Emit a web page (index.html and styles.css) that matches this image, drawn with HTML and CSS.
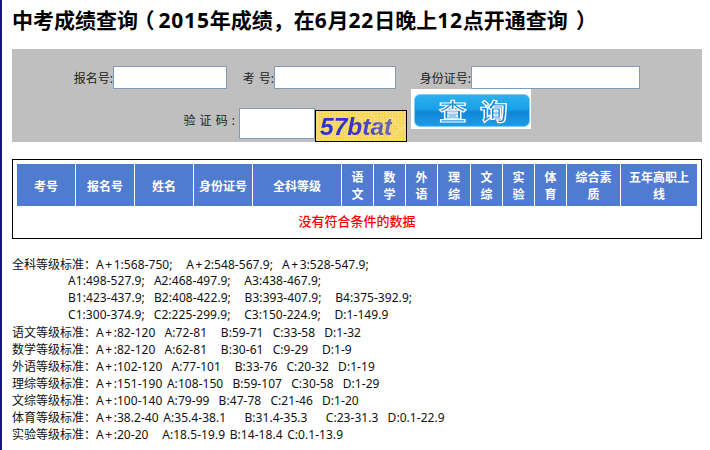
FILE: index.html
```html
<!DOCTYPE html>
<html lang="zh-CN">
<head>
<meta charset="utf-8">
<title>中考成绩查询</title>
<link rel="stylesheet" href="styles.css">
</head>
<body>
<main class="page">
  <h1 class="title">中考成绩查询<span class="paren-open">（</span><span class="num">2015</span>年成绩<span class="mid">，</span>在<span class="num">6</span>月<span class="num">22</span>日晚上<span class="num">12</span>点开通查询<span class="paren-close">）</span></h1>
  <form class="search">
    <div class="row-fields">
      <label class="lbl lbl-a" for="f1">报名号:</label><input class="field field-a" id="f1" type="text">
      <label class="lbl lbl-b" for="f2">考 号:</label><input class="field field-b" id="f2" type="text">
      <label class="lbl lbl-c" for="f3">身份证号:</label><input class="field field-c" id="f3" type="text">
    </div>
    <div class="row-code">
      <label class="lbl lbl-code" for="f4">验 证 码 :</label><input class="field field-code" id="f4" type="text">
      <div class="captcha"><span class="captcha-text">57btat</span>
        <svg class="captcha-noise" viewBox="0 0 90 30" aria-hidden="true"><path d="M55 2l9 12 12-8M62 14l-4 14M76 6l8 12-10 10M84 18l6-3M40 3l6 7" /></svg>
      </div>
      <button class="query" type="button"><span class="query-face"><span class="query-text">查 询</span></span></button>
    </div>
  </form>
  <section class="results">
    <table class="grid">
      <thead>
        <tr>
          <th class="c58">考号</th><th class="c58">报名号</th><th class="c58">姓名</th><th class="c58">身份证号</th><th class="c88">全科等级</th>
          <th class="c31">语文</th><th class="c31">数学</th><th class="c31">外语</th><th class="c32">理综</th><th class="c31">文综</th><th class="c31">实验</th><th class="c31">体育</th>
          <th class="c53">综合素质</th><th class="c76">五年高职上线</th>
        </tr>
      </thead>
      <tbody>
        <tr><td class="empty" colspan="14">没有符合条件的数据</td></tr>
      </tbody>
    </table>
  </section>
  <div class="notes">
    <p>全科等级标准<span class="colon">：</span><span class="v">A<span class="plus">+</span>1:568-750;   A<span class="plus">+</span>2:548-567.9;  A<span class="plus">+</span>3:528-547.9;</span></p>
    <p class="indent"><span class="v">A1:498-527.9;  A2:468-497.9;   A3:438-467.9;</span></p>
    <p class="indent"><span class="v">B1:423-437.9;  B2:408-422.9;   B3:393-407.9;   B4:375-392.9;</span></p>
    <p class="indent"><span class="v">C1:300-374.9;  C2:225-299.9;   C3:150-224.9;   D:1-149.9</span></p>
    <p>语文等级标准<span class="colon">：</span><span class="v">A<span class="plus">+</span>:82-120  A:72-81   B:59-71  C:33-58  D:1-32</span></p>
    <p>数学等级标准<span class="colon">：</span><span class="v">A<span class="plus">+</span>:82-120  A:62-81   B:30-61  C:9-29   D:1-9</span></p>
    <p>外语等级标准<span class="colon">：</span><span class="v">A<span class="plus">+</span>:102-120  A:77-101   B:33-76  C:20-32  D:1-19</span></p>
    <p>理综等级标准<span class="colon">：</span><span class="v">A<span class="plus">+</span>:151-190 A:108-150  B:59-107  C:30-58  D:1-29</span></p>
    <p>文综等级标准<span class="colon">：</span><span class="v">A<span class="plus">+</span>:100-140 A:79-99  B:47-78  C:21-46  D:1-20</span></p>
    <p>体育等级标准<span class="colon">：</span><span class="v">A<span class="plus">+</span>:38.2-40 A:35.4-38.1    B:31.4-35.3    C:23-31.3  D:0.1-22.9</span></p>
    <p>实验等级标准<span class="colon">：</span><span class="v">A<span class="plus">+</span>:20-20   A:18.5-19.9 B:14-18.4 C:0.1-13.9</span></p>
  </div>
</main>
</body>
</html>
```
FILE: styles.css
```css
* { box-sizing: border-box; }
html, body { margin: 0; padding: 0; background: #fff; }
body {
  width: 710px;
  height: 450px;
  overflow: hidden;
  color: #000;
  font-family: "Noto Sans", "Noto Sans CJK SC", sans-serif;
  font-size: 12px;
}
.page {
  height: 450px;
  border-left: 2px solid #1a1288;
  padding-left: 10px;
  width: 702px;
}
.title {
  margin: 0;
  height: 49px;
  padding-top: 3px;
  font-size: 21px;
  line-height: 32px;
  font-weight: 700;
  white-space: nowrap;
}
.num { letter-spacing: 0.8px; }
.paren-open { font-feature-settings: "palt"; padding-left: 5px; padding-right: 5px; }
.paren-close { font-feature-settings: "palt"; padding-left: 9px; }
.mid { font-family: "Noto Sans CJK TC", sans-serif; }
.search {
  width: 690px;
  height: 93px;
  background: #bfbfbf;
  padding-top: 17px;
}
.row-fields { display: flex; height: 23px; align-items: stretch; }
.row-code { display: flex; height: 53px; }
.lbl { display: block; text-align: right; line-height: 25px; color: #222; white-space: pre; word-spacing: 1px; }
.lbl-a { width: 101px; }
.lbl-b { width: 47px; }
.lbl-c { width: 75px; }
.field { height: 23px; border: 1px solid #7f9db9; background: #fff; padding: 0; }
.field-a { width: 114px; }
.field-b { width: 122px; }
.field-c { width: 169px; }
.lbl-code { width: 227px; padding-top: 19px; padding-right: 4px; line-height: 25px; }
.field-code {
  width: 76px;
  height: 31px;
  margin-top: 19px;
}
.captcha {
  position: relative;
  width: 92px;
  height: 32px;
  margin-top: 21px;
  border: 1px solid #000;
  background-color: #f6d65c;
  background-image: radial-gradient(#fbe89a 0.7px, transparent 0.8px);
  background-size: 3px 3px;
  display: flex;
  align-items: center;
  padding-left: 4px;
}
.captcha-text {
  font-family: "Liberation Sans", sans-serif;
  font-style: italic;
  font-weight: 700;
  font-size: 24.5px;
  line-height: 30px;
  padding-top: 1px;
  background: linear-gradient(90deg, #2a2ee0 0%, #3434d0 45%, #6a6ab4 100%);
  -webkit-background-clip: text;
  background-clip: text;
  color: transparent;
}
.captcha-noise {
  position: absolute;
  left: 0;
  top: 0;
  width: 90px;
  height: 30px;
  fill: none;
  stroke: #fff;
  stroke-opacity: 0.45;
  stroke-width: 0.7;
}
.query {
  width: 120px;
  height: 40px;
  margin-left: 4px;
  padding: 5px 1px 2px 3px;
  border: 0;
  background: #fff;
  display: block;
}
.query-face {
  display: flex;
  align-items: center;
  justify-content: center;
  width: 116px;
  height: 33px;
  border: 1px solid #7fcdf0;
  border-radius: 6px;
  background: linear-gradient(#2cb0ee 0%, #1aa0e8 45%, #0f86d8 55%, #1d9ce6 100%);
  overflow: hidden;
}
.query-text {
  display: inline-block;
  margin-left: 6px;
  transform: scaleX(1.2);
  font-family: "Noto Sans CJK SC", sans-serif;
  font-size: 23px;
  font-weight: 700;
  line-height: 31px;
  letter-spacing: 3px;
  color: #1a8ad8;
  -webkit-text-stroke: 1.2px #fff;
  white-space: pre;
}
.results {
  width: 690px;
  height: 80px;
  margin-top: 17px;
  border: 1px solid #000;
  padding: 3px;
}
.grid {
  border-collapse: separate;
  border-spacing: 1px;
  table-layout: fixed;
  width: 682px;
}
.grid th {
  height: 42px;
  padding: 0;
  background: #4f7bd0;
  color: #fff;
  font-size: 12px;
  line-height: 17px;
  font-weight: 700;
  font-family: "Noto Sans CJK SC", sans-serif;
}
.c58 { width: 58px; }
.c88 { width: 88px; }
.c31 { width: 31px; }
.c32 { width: 32px; }
.c53 { width: 53px; }
.c76 { width: 76px; }
.grid th.c31, .grid th.c32 { padding: 0 8px; }
.grid th.c53, .grid th.c76 { padding: 0 8px; }
.empty {
  height: 27px;
  padding: 0;
  text-align: center;
  color: #f00;
  font-size: 13px;
  font-weight: 500;
  font-family: "Noto Sans CJK SC", sans-serif;
}
.notes { margin-top: 16px; line-height: 17px; }
.notes p { margin: 0; height: 17px; white-space: pre; color: #111; }
.notes .indent { padding-left: 56px; }
.colon { font-family: "Noto Sans CJK TC", sans-serif; }
.v { letter-spacing: 0.05px; word-spacing: 1.4px; }
.plus { padding: 0 1.5px; }
```
